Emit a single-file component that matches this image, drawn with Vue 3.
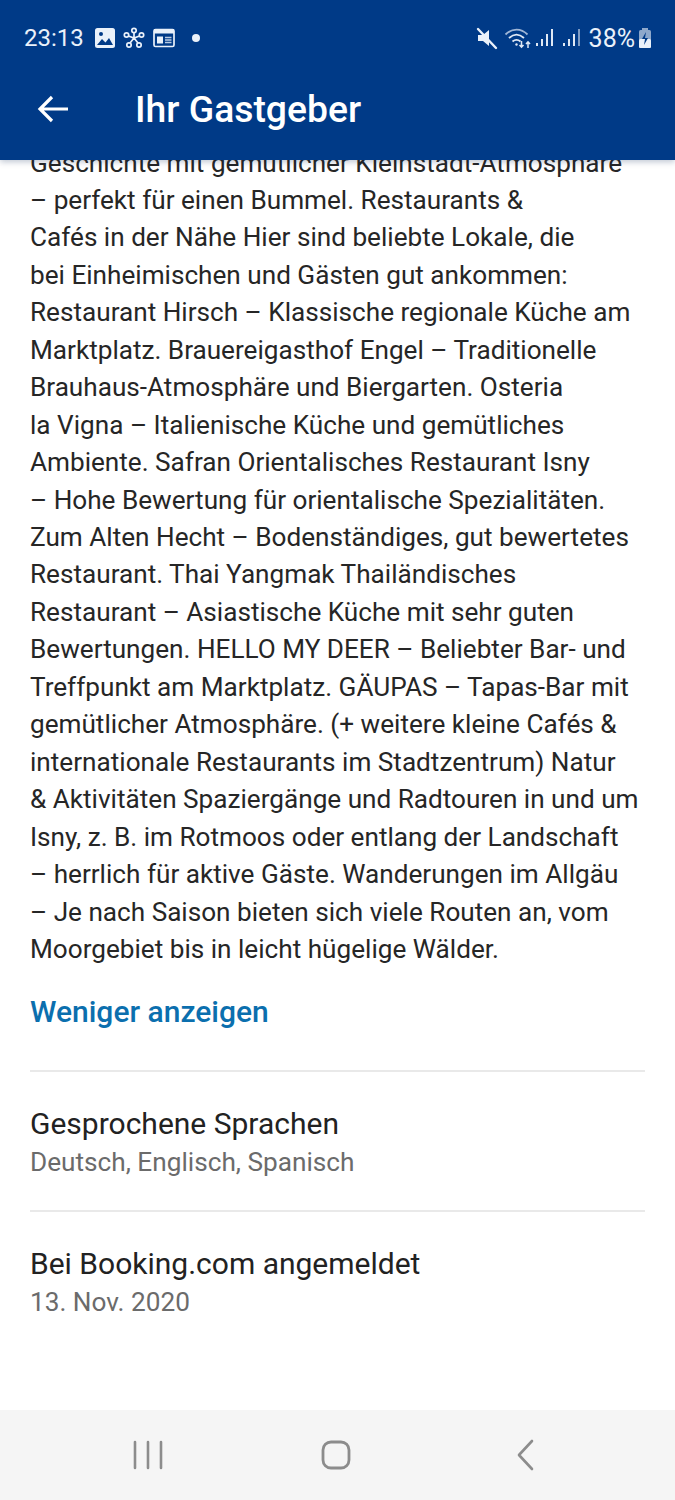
<script setup>
const lines = [
  'Geschichte mit gemütlicher Kleinstadt-Atmosphäre',
  '– perfekt für einen Bummel. Restaurants &',
  'Cafés in der Nähe Hier sind beliebte Lokale, die',
  'bei Einheimischen und Gästen gut ankommen:',
  'Restaurant Hirsch – Klassische regionale Küche am',
  'Marktplatz. Brauereigasthof Engel – Traditionelle',
  'Brauhaus-Atmosphäre und Biergarten. Osteria',
  'la Vigna – Italienische Küche und gemütliches',
  'Ambiente. Safran Orientalisches Restaurant Isny',
  '– Hohe Bewertung für orientalische Spezialitäten.',
  'Zum Alten Hecht – Bodenständiges, gut bewertetes',
  'Restaurant. Thai Yangmak Thailändisches',
  'Restaurant – Asiastische Küche mit sehr guten',
  'Bewertungen. HELLO MY DEER – Beliebter Bar- und',
  'Treffpunkt am Marktplatz. GÄUPAS – Tapas-Bar mit',
  'gemütlicher Atmosphäre. (+ weitere kleine Cafés &',
  'internationale Restaurants im Stadtzentrum) Natur',
  '& Aktivitäten Spaziergänge und Radtouren in und um',
  'Isny, z. B. im Rotmoos oder entlang der Landschaft',
  '– herrlich für aktive Gäste. Wanderungen im Allgäu',
  '– Je nach Saison bieten sich viele Routen an, vom',
  'Moorgebiet bis in leicht hügelige Wälder.'
]
</script>

<template>
  <div class="screen">
    <header class="top">
      <div class="status">
        <div class="status-left">
          <span class="time">23:13</span>
          <svg class="ic" width="20" height="20" viewBox="0 0 20 20">
            <rect x="0" y="0" width="20" height="20" rx="2.500" fill="#eaf1fa"/>
            <path d="M2 17l5-6 3.500 3.500L14 10l4 7z" fill="#003a87"/>
            <circle cx="6" cy="6" r="2" fill="#003a87"/>
          </svg>
          <svg class="ic" width="22" height="22" viewBox="0 0 22 22" fill="none" stroke="#eaf1fa" stroke-width="1.700">
            <circle cx="11" cy="3.500" r="2.200"/><circle cx="3.500" cy="8" r="2.200"/><circle cx="18.500" cy="8" r="2.200"/>
            <circle cx="6" cy="18" r="2.200"/><circle cx="16" cy="18" r="2.200"/>
            <path d="M11 6v5M5.500 9l5.500 2 5.500-2M11 11l-4 5M11 11l4 5"/>
          </svg>
          <svg class="ic" width="22" height="20" viewBox="0 0 22 20" fill="none">
            <rect x="1" y="1.500" width="20" height="17" rx="1.500" stroke="#eaf1fa" stroke-width="1.700"/>
            <rect x="1" y="1" width="20" height="4.500" fill="#eaf1fa"/>
            <rect x="4" y="8.500" width="6" height="7" fill="#eaf1fa"/>
            <path d="M12 9.500h6.500M12 12h6.500M12 14.500h6.500" stroke="#b9cbe3" stroke-width="1.500"/>
          </svg>
          <span class="dot"></span>
        </div>
        <div class="status-right">
          <svg width="24" height="24" viewBox="0 0 24 24">
            <path d="M3 8h5l6-5v16l-6-5H3z" fill="#eaf1fa" transform="translate(0 1)"/>
            <path d="M3 3l18 19" stroke="#eaf1fa" stroke-width="2.400" stroke-linecap="round"/>
          </svg>
          <svg class="wifi" width="28" height="24" viewBox="0 0 28 24" fill="none" stroke="#dfe8f4" stroke-width="1.800">
            <path d="M1.500 8.500C8 2 17 2 23.500 8.500" stroke="#9fb6d6"/>
            <path d="M5 12c5-4.500 10-4.500 15 0"/>
            <path d="M8.500 15.500c3-2.500 5-2.500 8 0"/>
            <circle cx="12.500" cy="18.500" r="1.200" fill="#dfe8f4" stroke="none"/>
            <path d="M17.500 15v6M15.500 19l2 2.200 2-2.200M24 22v-6M22 18l2-2.200 2 2.200" stroke-width="1.500"/>
          </svg>
          <svg class="bars" width="19" height="20" viewBox="0 0 19 20" fill="#dfe8f4">
            <rect x="1" y="15" width="2" height="3"/><rect x="6" y="11" width="2" height="7"/>
            <rect x="11" y="6" width="2" height="12"/><rect x="16" y="1" width="2" height="17"/>
          </svg>
          <svg class="bars two" width="19" height="20" viewBox="0 0 19 20" fill="#dfe8f4">
            <rect x="1" y="15" width="2" height="3"/><rect x="6" y="11" width="2" height="7"/>
            <rect x="11" y="6" width="2" height="12"/><rect x="16" y="1" width="2" height="17" fill="#7f9cc4"/>
          </svg>
          <span class="pct">38%</span>
          <svg width="14" height="20" viewBox="0 0 14 20">
            <rect x="4" y="0" width="6" height="2" fill="#8ea8cb"/>
            <rect x="1" y="2" width="12" height="18" rx="1.500" fill="#8ea8cb"/>
            <rect x="1" y="11" width="12" height="9" rx="1.500" fill="#eaf1fa"/>
            <path d="M8 4l-4 7h3l-1 6 4-7H7z" fill="#003a87"/>
          </svg>
        </div>
      </div>
      <div class="bar">
        <svg class="back" width="32" height="28" viewBox="0 0 32 28" fill="none" stroke="#fff" stroke-width="3.200">
          <path d="M31 14H3M15 2L3 14l12 12"/>
        </svg>
        <h1>Ihr Gastgeber</h1>
      </div>
    </header>

    <main class="content">
      <p class="desc"><span v-for="l in lines" :key="l" class="line">{{ l }}</span></p>
      <a class="less">Weniger anzeigen</a>
      <section class="row first">
        <div class="label">Gesprochene Sprachen</div>
        <div class="value">Deutsch, Englisch, Spanisch</div>
      </section>
      <section class="row">
        <div class="label">Bei Booking.com angemeldet</div>
        <div class="value">13. Nov. 2020</div>
      </section>
    </main>

    <nav class="nav">
      <svg width="30" height="30" viewBox="0 0 30 30" stroke="#8c8c8c" stroke-width="2.600" stroke-linecap="round">
        <path d="M2 2v26M15 2v26M28 2v26"/>
      </svg>
      <svg class="home" width="30" height="30" viewBox="0 0 30 30" fill="none" stroke="#8c8c8c" stroke-width="2.800">
        <rect x="2" y="2" width="26" height="26" rx="8"/>
      </svg>
      <svg class="prev" width="20" height="32" viewBox="0 0 20 32" fill="none" stroke="#8c8c8c" stroke-width="2.600" stroke-linecap="round" stroke-linejoin="round">
        <path d="M16 2L3 16l13 14"/>
      </svg>
    </nav>
  </div>
</template>

<style scoped>
.screen {
  width: 675px;
  height: 1500px;
  display: flex;
  flex-direction: column;
  overflow: hidden;
  background: #fff;
  font-family: Roboto, "Liberation Sans", sans-serif;
  color: #262626;
}
.top {
  height: 160px;
  flex: none;
  background: #003a87;
  color: #fff;
  position: relative;
  z-index: 2;
  box-shadow: 0 2px 6px rgba(0, 30, 80, 0.25);
}
.status {
  height: 76px;
  padding: 0 23px 0 24px;
  display: flex;
  align-items: center;
  justify-content: space-between;
  color: #eaf1fa;
}
.status-left, .status-right { display: flex; align-items: center; }
.time { font-size: 24px; margin-right: 11px; }
.ic { margin-right: 8px; }
.dot { width: 8px; height: 8px; border-radius: 50%; background: #eaf1fa; margin-left: 9px; }
.wifi { margin-left: 5px; }
.bars { margin-left: 3px; }
.bars.two { margin-left: 8px; }
.pct { font-size: 25px; margin: 0 3px 0 8px; }
.bar {
  height: 66px;
  display: flex;
  align-items: center;
  padding-left: 37px;
}
.back { flex: none; }
h1 {
  margin: 0 0 0 66px;
  font-size: 37.300px;
  font-weight: 500;
  line-height: 66px;
}
.content {
  flex: 1;
  padding: 0 30px;
  overflow: hidden;
}
.desc {
  margin: -15.500px 0 0;
  font-size: 26.150px;
  line-height: 37.450px;
}
.line { display: block; white-space: nowrap; }
.less {
  display: block;
  margin-top: 24.500px;
  font-size: 30px;
  line-height: 38px;
  font-weight: 500;
  color: #0b6fae;
}
.row {
  border-top: 2px solid #e9e9e9;
  height: 140px;
  padding-top: 33px;
  box-sizing: border-box;
}
.row.first { margin-top: 39px; }
.label { font-size: 30px; line-height: 38px; color: #222; }
.value { font-size: 26.200px; line-height: 38px; color: #6b6b6b; }
.nav {
  height: 90px;
  flex: none;
  background: #f5f5f5;
  display: flex;
  align-items: center;
  padding-left: 133px;
}
.home { margin-left: 158px; }
.prev { margin-left: 165px; }
</style>
